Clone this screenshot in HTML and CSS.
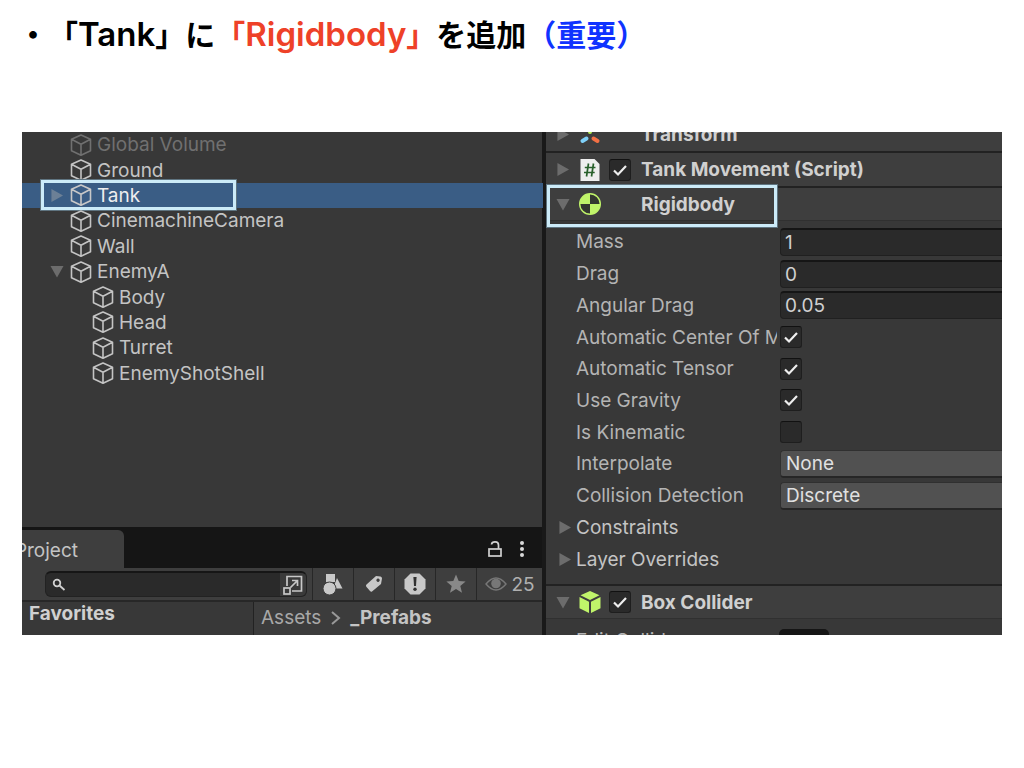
FILE: index.html
```html
<!DOCTYPE html>
<html lang="ja">
<head>
<meta charset="utf-8">
<meta name="viewport" content="width=device-width, initial-scale=1">
<title>「Tank」に「Rigidbody」を追加</title>
<link rel="stylesheet" href="styles.css">
</head>
<body>
<svg class="defs" aria-hidden="true">
  <symbol id="cube" viewBox="0 0 22 22"><path d="M11 1 L20.500 5.300 V16.700 L11 21.200 L1.500 16.700 V5.300 Z M1.500 5.300 L11 10.300 L20.500 5.300 M11 10.300 V21.200" fill="none" stroke="currentColor" stroke-width="1.600" stroke-linejoin="round"/></symbol>
  <symbol id="right" viewBox="0 0 14 14"><path d="M1 0 L13.500 7 L1 14 Z" fill="currentColor"/></symbol>
  <symbol id="down" viewBox="0 0 14 14"><path d="M0 1 H14 L7 13.500 Z" fill="currentColor"/></symbol>
</svg>

<h1 class="title">・「<span class="latin">Tank</span>」に<span class="red">「<span class="latin">Rigidbody</span>」</span>を追加<span class="blue">（重要）</span></h1>

<main class="editor">
  <div class="left">
    <ul class="tree">
      <li class="node faded"><span class="arrow"></span><svg class="cube"><use href="#cube"/></svg>Global Volume</li>
      <li class="node"><span class="arrow"></span><svg class="cube"><use href="#cube"/></svg>Ground</li>
      <li class="node selected"><svg class="arrow"><use href="#right"/></svg><svg class="cube"><use href="#cube"/></svg>Tank<span class="marker marker-tank"></span></li>
      <li class="node"><span class="arrow"></span><svg class="cube"><use href="#cube"/></svg>CinemachineCamera</li>
      <li class="node"><span class="arrow"></span><svg class="cube"><use href="#cube"/></svg>Wall</li>
      <li class="node"><svg class="arrow"><use href="#down"/></svg><svg class="cube"><use href="#cube"/></svg>EnemyA</li>
      <li class="node child"><span class="arrow"></span><svg class="cube"><use href="#cube"/></svg>Body</li>
      <li class="node child"><span class="arrow"></span><svg class="cube"><use href="#cube"/></svg>Head</li>
      <li class="node child"><span class="arrow"></span><svg class="cube"><use href="#cube"/></svg>Turret</li>
      <li class="node child"><span class="arrow"></span><svg class="cube"><use href="#cube"/></svg>EnemyShotShell</li>
    </ul>
    <section class="project">
      <div class="tabs">
        <button class="tab" type="button"><span>Project</span></button>
        <button class="plain" type="button" aria-label="Lock"><svg width="16" height="18" viewBox="0 0 16 18" fill="none" stroke="#d0d0d0" stroke-width="1.700"><rect x="2" y="9" width="12" height="7"/><path d="M4.500 4.500 C5 1 11.500 1 11.500 5 V9"/></svg></button>
        <button class="plain" type="button" aria-label="More"><svg width="6" height="18" viewBox="0 0 6 18" fill="#d8d8d8"><circle cx="3" cy="3" r="2"/><circle cx="3" cy="9" r="2"/><circle cx="3" cy="15" r="2"/></svg></button>
      </div>
      <div class="toolbar">
        <div class="search">
          <svg width="14" height="14" viewBox="0 0 14 14" fill="none" stroke="#d0d0d0" stroke-width="1.800"><circle cx="5" cy="5" r="3.300"/><path d="M7.500 7.500 L12.500 12"/></svg>
          <input class="query" type="text" aria-label="Search">
          <button class="open" type="button" aria-label="Open search window"><svg width="20" height="20" viewBox="0 0 20 20" fill="none" stroke="#c8c8c8" stroke-width="1.700"><path d="M4 11 V1.500 H18.500 V16 H9"/><rect x="1" y="13" width="6" height="6"/><path d="M7.500 12.500 L14 6 M9 5.500 H14.500 V11"/></svg></button>
        </div>
        <button class="tool" type="button" aria-label="Filter by type"><svg width="20" height="22" viewBox="0 0 20 22" fill="#c8c8c8"><path d="M3 1 H12 V9 H3 Z"/><path d="M14 5 L19.500 15.500 H10 Z"/><circle cx="6.500" cy="15.500" r="6.500" stroke="#3e3e3e"/></svg></button>
        <button class="tool" type="button" aria-label="Filter by label"><svg width="18" height="18" viewBox="0 0 18 18"><path fill="#c8c8c8" fill-rule="evenodd" d="M11 1 L15.500 1.500 Q17 2 17 3.500 L16 9 L7 16.500 Q6 17.200 5 16 L1.300 11.700 Q.5 10.500 1.500 9.500 Z M13 3.500 a1.700 1.700 0 1 0 .1 0 Z"/></svg></button>
        <button class="tool" type="button" aria-label="Show errors"><svg width="22" height="22" viewBox="0 0 22 22"><path fill="#c8c8c8" d="M6.500 .5 H15.500 L21.500 6.500 V15.500 L15.500 21.500 H6.500 L.5 15.500 V6.500 Z"/><path fill="#303030" d="M9.400 4 H12.600 L12 13 H10 Z"/><circle cx="11" cy="16.300" r="1.700" fill="#303030"/></svg></button>
        <button class="tool" type="button" aria-label="Favorite"><svg width="20" height="20" viewBox="0 0 20 20"><path fill="#888" d="M10 .5 L12.700 7 L19.600 7.500 L14.300 12 L16 18.800 L10 15.100 L4 18.800 L5.700 12 L.4 7.500 L7.300 7 Z"/></svg></button>
        <button class="tool hidden-count" type="button"><svg width="22" height="16" viewBox="0 0 22 16"><path d="M1 8 Q11 -4 21 8 Q11 20 1 8 Z" fill="none" stroke="#777" stroke-width="1.400"/><circle cx="11" cy="7.500" r="4.800" fill="#777"/></svg>25</button>
      </div>
      <div class="browser">
        <div class="favorites">Favorites</div>
        <nav class="crumbs"><a href="#assets">Assets</a><svg width="11" height="14" viewBox="0 0 11 14"><path d="M2 1 L9 7 L2 13" fill="none" stroke="#999" stroke-width="2"/></svg><a class="current" href="#prefabs">_Prefabs</a></nav>
      </div>
    </section>
  </div>

  <div class="inspector">
    <div class="component cut-top">
      <svg class="fold"><use href="#right"/></svg>
      <svg class="icon" viewBox="0 0 22 22" fill="none" stroke-width="4" stroke-linecap="round"><path d="M11 2 V8" stroke="#b5ef55"/><path d="M7.500 14.500 L3.500 17" stroke="#7fd0f8"/><path d="M14.500 14.500 L18.500 17" stroke="#f37044"/></svg>
      <span class="name">Transform</span>
    </div>
    <div class="component">
      <svg class="fold"><use href="#right"/></svg>
      <svg class="icon" viewBox="0 0 22 22"><path d="M1.500 0 H15.500 L20.500 5 V22 H1.500 Z" fill="#eee"/><path d="M9.500 4.500 L7.500 17.500 M14.500 4.500 L12.500 17.500 M5.800 8.500 H16.500 M5 13.500 H15.700" stroke="#28602b" stroke-width="1.700"/></svg>
      <input class="check" type="checkbox" id="tm" checked>
      <label class="name" for="tm">Tank Movement (Script)</label>
    </div>
    <div class="component open-component">
      <svg class="fold"><use href="#down"/></svg>
      <svg class="icon" viewBox="0 0 22 22"><circle cx="11" cy="11" r="10.300" fill="#343830" stroke="#c0f46a" stroke-width="1.400"/><path d="M11 11 V.7 A10.300 10.300 0 0 0 .7 11 Z M11 11 H21.300 A10.300 10.300 0 0 1 11 21.300 Z" fill="#c0f46a"/></svg>
      <span class="name">Rigidbody</span>
      <span class="marker marker-rigidbody"></span>
    </div>
    <div class="fields">
      <label class="label" for="mass">Mass</label><input class="value" id="mass" type="text" value="1">
      <label class="label" for="drag">Drag</label><input class="value" id="drag" type="text" value="0">
      <label class="label" for="angular">Angular Drag</label><input class="value" id="angular" type="text" value="0.05">
      <label class="label" for="center">Automatic Center Of Mass</label><input class="check" id="center" type="checkbox" checked>
      <label class="label" for="tensor">Automatic Tensor</label><input class="check" id="tensor" type="checkbox" checked>
      <label class="label" for="gravity">Use Gravity</label><input class="check" id="gravity" type="checkbox" checked>
      <label class="label" for="kinematic">Is Kinematic</label><input class="check" id="kinematic" type="checkbox">
      <label class="label" for="interpolate">Interpolate</label><select class="choice" id="interpolate"><option>None</option></select>
      <label class="label" for="collision">Collision Detection</label><select class="choice" id="collision"><option>Discrete</option></select>
      <button class="foldout" type="button"><svg class="fold"><use href="#right"/></svg>Constraints</button>
      <button class="foldout" type="button"><svg class="fold"><use href="#right"/></svg>Layer Overrides</button>
    </div>
    <div class="component open-component ruled">
      <svg class="fold"><use href="#down"/></svg>
      <svg class="icon" viewBox="0 0 22 22" fill="#c0f46a"><path d="M11 0 L20.500 4.300 L11 9 L1.500 4.300 Z M.5 6 L10 10.700 V22 L.5 17.300 Z M21.500 6 L12 10.700 V22 L21.500 17.300 Z"/></svg>
      <input class="check" type="checkbox" id="bc" checked>
      <label class="name" for="bc">Box Collider</label>
    </div>
    <div class="edit">
      <span class="edit-label">Edit Collider</span>
      <button class="edit-button" type="button" aria-label="Edit Collider"><svg width="20" height="16" viewBox="0 0 20 16"><path d="M7 1 H13 M4 12 H16" stroke="#ddd" stroke-width="2"/></svg></button>
    </div>
  </div>
</main>
</body>
</html>
```
FILE: styles.css
```css
* { box-sizing: border-box; }
body {
  margin: 0;
  background: #fff;
  font-family: Inter, "Noto Sans", sans-serif;
  font-size: 19px;
}
button, input, select { font: inherit; color: inherit; margin: 0; border: 0; padding: 0; background: none; }
a { color: inherit; text-decoration: none; }
svg { flex: none; display: block; }
.defs { position: absolute; width: 0; height: 0; }

.title {
  margin: 0;
  padding: 11px 18px 0;
  height: 132px;
  font: 700 30px/44px "Noto Sans CJK JP", sans-serif;
  text-spacing-trim: space-all;
  color: #000;
  white-space: nowrap;
}
.latin { font-family: Inter, sans-serif; font-weight: 600; font-size: 33px; }
.red { color: #ee4128; }
.blue { color: #1033ff; }

.editor {
  display: grid;
  grid-template-columns: 521fr 459fr;
  margin: 0 22px;
  background: #383838;
  color: #c4c4c4;
  height: 503px;
  overflow: hidden;
}

.left { display: flex; flex-direction: column; min-width: 0; }
.tree {
  display: grid;
  grid-template-rows: repeat(10, 1fr);
  height: 254px;
  margin: 0 0 141px;
  padding: 0;
  list-style: none;
}
.node {
  position: relative;
  display: flex;
  align-items: center;
  padding-left: 28px;
  white-space: nowrap;
}
.child { padding-left: 50px; }
.faded { color: #707070; }
.selected { background: #3a5d85; color: #eee; }
.selected .cube { color: #c8c8c8; }
.arrow { width: 14px; height: 13px; margin-right: 6px; color: #6c6c6c; }
.selected .arrow { color: #6c8096; }
.cube { width: 22px; height: 22px; margin-right: 5px; }
.marker {
  position: absolute;
  border: 4px solid #ccebf8;
  outline: 1px solid #5f7480;
  outline-offset: -1px;
  pointer-events: none;
}
.marker-tank { left: 18px; top: -4px; width: 197px; height: 32px; }
.marker-rigidbody { left: 0; top: -4px; width: 232px; height: 44px; }

.tabs {
  display: flex;
  align-items: center;
  height: 41px;
  padding: 3px 18px 0 0;
  background: #151515;
}
.tab {
  display: flex;
  justify-content: flex-end;
  align-items: center;
  width: 102px;
  height: 38px;
  margin-right: auto;
  padding: 2px 46px 0 0;
  background: #3e3e3e;
  border-radius: 0 6px 0 0;
  overflow: hidden;
}
.plain { margin-left: 16px; }
.toolbar { display: flex; height: 34px; background: #3e3e3e; border-bottom: 2px solid #272727; }
.search {
  flex: 1;
  min-width: 0;
  display: flex;
  align-items: center;
  height: 26px;
  margin: 3px 5px 0 23px;
  padding-left: 6px;
  border: 1px solid #222;
  border-top: 2px solid #161616;
  border-radius: 6px;
  background: #2a2a2a;
  overflow: hidden;
}
.query { flex: 1; min-width: 0; }
.open { width: 26px; height: 26px; display: grid; place-items: center; background: #3a3a3a; }
.tool {
  width: 41px;
  display: grid;
  place-items: center;
  border-left: 1px solid #272727;
}
.hidden-count { display: flex; align-items: center; justify-content: center; gap: 4px; width: 67px; color: #b0b0b0; }
.browser { display: grid; grid-template-columns: 231px 1fr; height: 33px; }
.favorites { padding-left: 7px; font-weight: 700; line-height: 24px; color: #d0d0d0; }
.crumbs { display: flex; align-items: center; gap: 9px; padding: 0 0 2px 7px; border-left: 1px solid #222; background: #3c3c3c; color: #a8a8a8; }
.current { font-weight: 700; color: #c4c4c4; }

.inspector { min-width: 0; border-left: 4px solid #191919; margin-left: -1px; }
.component {
  position: relative;
  display: flex;
  align-items: center;
  height: 35px;
  padding-left: 10px;
  background: #3e3e3e;
  border-bottom: 2px solid #222;
}
.cut-top { margin-top: -14px; }
.open-component { height: 33px; border-bottom: 1px solid #303030; }
.ruled { height: 35px; border-top: 2px solid #222; }
.fold { width: 14px; height: 13px; color: #6c6c6c; }
.icon { width: 22px; height: 22px; margin: 0 8px 0 9px; }
.name { margin-left: 10px; font-weight: 700; color: #d0d0d0; }
.icon + .name { margin-left: 32px; }
.check {
  appearance: none;
  flex: none;
  width: 22px;
  height: 22px;
  border: 1px solid #1e1e1e;
  border-top-color: #111;
  border-radius: 3px;
  background: #2a2a2a;
}
.check:checked {
  background-image: url("data:image/svg+xml,%3Csvg xmlns='http://www.w3.org/2000/svg' viewBox='0 0 20 20'%3E%3Cpath d='M4 10.500 L8 14.500 L16 6' fill='none' stroke='%23eee' stroke-width='2.200'/%3E%3C/svg%3E");
}
.fields {
  display: grid;
  grid-template-columns: 204px 1fr;
  grid-template-rows: repeat(11, 1fr);
  align-items: center;
  height: 363px;
  padding: 5px 0 9px 30px;
  color: #b4b4b4;
}
.label { overflow: hidden; white-space: nowrap; margin-right: 3px; }
.value {
  width: 100%;
  height: 28px;
  padding-left: 4px;
  border: 1px solid #202020;
  border-top: 2px solid #151515;
  border-right: 0;
  border-radius: 4px 0 0 4px;
  background: #2a2a2a;
  color: #d0d0d0;
}
.choice {
  appearance: none;
  width: 100%;
  height: 28px;
  padding-left: 5px;
  border: 1px solid #303030;
  border-bottom: 2px solid #262626;
  border-right: 0;
  border-radius: 4px 0 0 4px;
  background: #515151;
  color: #e0e0e0;
}
.foldout {
  grid-column: 1 / -1;
  display: flex;
  align-items: center;
  gap: 4px;
  margin-left: -18px;
  color: #c4c4c4;
}
.edit { display: flex; padding: 10px 0 0 30px; color: #b4b4b4; }
.edit-label { width: 203px; line-height: 24px; }
.edit-button { display: grid; place-items: center; width: 50px; height: 28px; border-radius: 5px; background: #151515; }
```
